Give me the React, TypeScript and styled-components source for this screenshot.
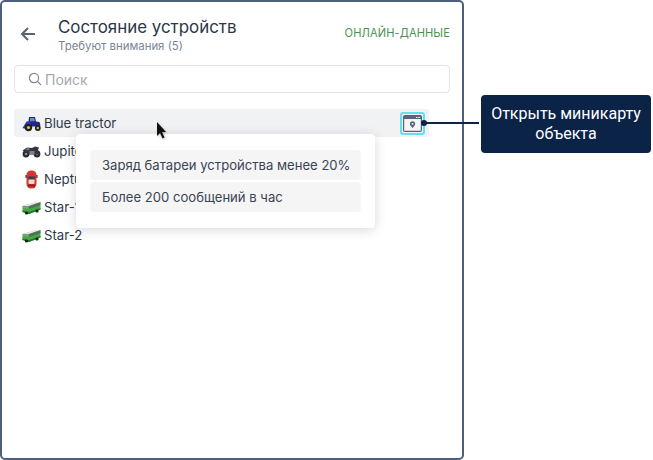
import React from "react";
import styled, { createGlobalStyle } from "styled-components";

const Global = createGlobalStyle`
  html, body { margin: 0; padding: 0; background: #fff; }
  body { font-family: Inter, "Noto Sans", sans-serif; overflow: hidden; }
`;
const Page = styled.div`
  position: relative;
  width: 653px;
  height: 460px;
  display: flex;
  align-items: flex-start;
  background: #fff;
`;
const Frame = styled.section`
  box-sizing: border-box;
  width: 464px;
  height: 460px;
  border: 2px solid #4c5f80;
  border-radius: 5px;
  padding: 13px 12px 0;
  display: flex;
  flex-direction: column;
`;
const Header = styled.header`
  display: flex;
  align-items: flex-start;
  height: 50px;
`;
const Back = styled.div`
  width: 44px;
  height: 38px;
  display: flex;
  align-items: center;
  padding-left: 6px;
  box-sizing: border-box;
  color: #5a6474;
`;
const Titles = styled.div`
  flex: 1;
  display: flex;
  flex-direction: column;
`;
const Title = styled.div`
  font-size: 16.9px;
  line-height: 24px;
  font-weight: 400;
  color: #2b3648;
`;
const Subtitle = styled.div`
  font-size: 11.4px;
  line-height: 14px;
  color: #7c8593;
`;
const Online = styled.div`
  font-size: 11.1px;
  line-height: 16px;
  margin-top: 10px;
  color: #4a9152;
  letter-spacing: 0.1px;
`;
const Search = styled.div`
  box-sizing: border-box;
  width: 436px;
  height: 28px;
  border: 1px solid #e2e4e8;
  border-radius: 4px;
  display: flex;
  align-items: center;
  gap: 3px;
  padding-left: 13px;
  color: #a4aab3;
  font-size: 14px;
`;
const List = styled.div`
  display: flex;
  flex-direction: column;
  margin-top: 16px;
`;
const Row = styled.div<{ $active?: boolean }>`
  box-sizing: border-box;
  width: 415px;
  height: 28px;
  border-radius: 3px;
  display: flex;
  align-items: center;
  padding-left: 8px;
  gap: 3px;
  font-size: 13.2px;
  color: #2e3949;
  background: ${(p) => (p.$active ? "#f1f2f4" : "transparent")};
`;
const IconBox = styled.span`
  width: 19px;
  height: 19px;
  flex: none;
  display: block;
`;
const Popup = styled.div`
  position: absolute;
  left: 76px;
  top: 134px;
  box-sizing: border-box;
  width: 299px;
  height: 94px;
  padding: 16px 14px;
  border-radius: 4px;
  background: #fff;
  box-shadow: 0 2px 12px rgba(30, 40, 60, 0.18);
  display: flex;
  flex-direction: column;
  gap: 2px;
`;
const PopupItem = styled.div`
  height: 30px;
  border-radius: 4px;
  background: #f5f5f6;
  padding-left: 12px;
  display: flex;
  align-items: center;
  font-size: 13.1px;
  color: #3a4453;
`;
const Cursor = styled.svg`
  position: absolute;
  left: 156px;
  top: 122px;
  filter: drop-shadow(1px 1px 1px rgba(0, 0, 0, 0.25));
`;
const MapButton = styled.div`
  position: absolute;
  left: 400px;
  top: 112px;
  box-sizing: border-box;
  width: 25px;
  height: 23px;
  border: 2px solid #62e0f2;
  border-radius: 3px;
  display: flex;
  align-items: center;
  justify-content: center;
`;
const Dot = styled.div`
  position: absolute;
  left: 421px;
  top: 120px;
  width: 6px;
  height: 6px;
  border-radius: 50%;
  background: #0b2347;
`;
const Line = styled.div`
  position: absolute;
  left: 425px;
  top: 122px;
  width: 54px;
  height: 2px;
  background: #0b2347;
`;
const Callout = styled.div`
  position: absolute;
  left: 481px;
  top: 95px;
  box-sizing: border-box;
  width: 170px;
  height: 58px;
  border-radius: 4px;
  background: #0b2347;
  color: #fff;
  font-family: Roboto, sans-serif;
  font-size: 16px;
  line-height: 20px;
  text-align: center;
  display: flex;
  align-items: center;
  justify-content: center;
`;

const Tractor = () => (
  <IconBox>
    <svg width="19" height="19" viewBox="0 0 19 19">
      <path d="M7 3h6l1 4.5 3.5.5 1 3.5-2 1H6z" fill="#1f2683" />
      <path d="M0.5 14l4-6.5 4-.5v4.5l-5 3.5z" fill="#2f3ab8" />
      <path d="M8 4h4.2l.7 3.2H8z" fill="#6f8bb3" />
      <circle cx="6.5" cy="13.5" r="3.7" fill="#1e2026" />
      <circle cx="6.5" cy="13.5" r="1.6" fill="#e5c320" />
      <circle cx="15.8" cy="14" r="2.9" fill="#1e2026" />
      <circle cx="15.8" cy="14" r="1.2" fill="#e5c320" />
    </svg>
  </IconBox>
);
const Moto = () => (
  <IconBox>
    <svg width="19" height="19" viewBox="0 0 19 19">
      <circle cx="4" cy="12" r="3.4" fill="#26282b" />
      <circle cx="15" cy="12" r="3.4" fill="#26282b" />
      <circle cx="4" cy="12" r="1.3" fill="#8d9196" />
      <circle cx="15" cy="12" r="1.3" fill="#8d9196" />
      <path d="M0.5 8.5L5 5.5l5 .5 3-1.5 4 1-1 2.5 2 4.5H7L5 10.5z" fill="#34373b" />
      <path d="M3 7l3-1 2 1-2 1.5z" fill="#777b80" />
      <rect x="7.5" y="9" width="5" height="3.5" fill="#7f8389" />
    </svg>
  </IconBox>
);
const Car = () => (
  <IconBox>
    <svg width="19" height="19" viewBox="0 0 19 19">
      <rect x="4.5" y="0.5" width="10" height="18" rx="4.5" fill="#d8352e" />
      <rect x="3.4" y="5" width="1.6" height="3" fill="#555" />
      <rect x="14" y="5" width="1.6" height="3" fill="#555" />
      <path d="M5.8 6.5h7.4l-1.1 3H6.9z" fill="#3a3f46" />
      <rect x="6.5" y="9.5" width="6" height="4.5" rx="1" fill="#eed8d4" />
      <rect x="6" y="14.5" width="7" height="2" fill="#8f1d19" />
    </svg>
  </IconBox>
);
const Bus = () => (
  <IconBox>
    <svg width="19" height="19" viewBox="0 0 19 19">
      <path d="M0.5 8L6 6.5 18.5 4v7.5L7 16 0.5 14z" fill="#3fae3c" />
      <path d="M0.5 8L14 3.8l4.5.2L7 8z" fill="#e4e6dc" />
      <path d="M7 8.2l11.3-3.9v3L7 11z" fill="#5a6a66" />
      <path d="M1 8.6L6.4 8v3l-5.4-.9z" fill="#8a9a94" />
      <path d="M0.5 12.5L7 14l11.5-4v1.5L7 16 0.5 14z" fill="#1d7a2a" />
      <circle cx="4.5" cy="15" r="1.6" fill="#1c1c1c" />
      <circle cx="15" cy="13" r="1.6" fill="#1c1c1c" />
    </svg>
  </IconBox>
);

const rows = [
  { name: "Blue tractor", icon: <Tractor />, active: true },
  { name: "Jupiter", icon: <Moto /> },
  { name: "Neptune", icon: <Car /> },
  { name: "Star-1", icon: <Bus /> },
  { name: "Star-2", icon: <Bus /> },
];

export default function App() {
  return (
    <Page>
      <Global />
      <Frame>
        <Header>
          <Back>
            <svg width="16" height="14" viewBox="0 0 16 14" fill="none" stroke="currentColor" strokeWidth="2">
              <path d="M15 7H2M8 1L2 7l6 6" />
            </svg>
          </Back>
          <Titles>
            <Title>Состояние устройств</Title>
            <Subtitle>Требуют внимания (5)</Subtitle>
          </Titles>
          <Online>ОНЛАЙН-ДАННЫЕ</Online>
        </Header>
        <Search>
          <svg width="14" height="14" viewBox="0 0 14 14" fill="none" stroke="#7d8590" strokeWidth="1.2">
            <circle cx="6" cy="6" r="4.6" />
            <path d="M9.4 9.4L13 13" />
          </svg>
          Поиск
        </Search>
        <List>
          {rows.map((r) => (
            <Row key={r.name} $active={r.active}>
              {r.icon}
              {r.name}
            </Row>
          ))}
        </List>
      </Frame>
      <Popup>
        <PopupItem>Заряд батареи устройства менее 20%</PopupItem>
        <PopupItem>Более 200 сообщений в час</PopupItem>
      </Popup>
      <Cursor width="12" height="18" viewBox="0 0 12 18">
        <path d="M1 0l9 10H6l2.5 5.5-2 1L4 11l-3 3z" fill="#111" />
      </Cursor>
      <MapButton>
        <svg width="19" height="17" viewBox="0 0 19 17" fill="none">
          <rect x="0.6" y="0.6" width="17.8" height="15.8" rx="1.2" fill="#f4f5f6" stroke="#5a6474" strokeWidth="1.2" />
          <rect x="1" y="1" width="17" height="3" fill="#5a6474" />
          <rect x="13" y="2" width="1.5" height="1" fill="#fff" />
          <rect x="15.3" y="2" width="1.5" height="1" fill="#fff" />
          <circle cx="9.5" cy="8.8" r="2.6" fill="#5a6474" />
          <circle cx="9.5" cy="8.8" r="0.9" fill="#fff" />
          <path d="M7.6 10.3l1.9 3 1.9-3z" fill="#5a6474" />
        </svg>
      </MapButton>
      <Line />
      <Dot />
      <Callout>
        Открыть миникарту
        <br />
        объекта
      </Callout>
    </Page>
  );
}
